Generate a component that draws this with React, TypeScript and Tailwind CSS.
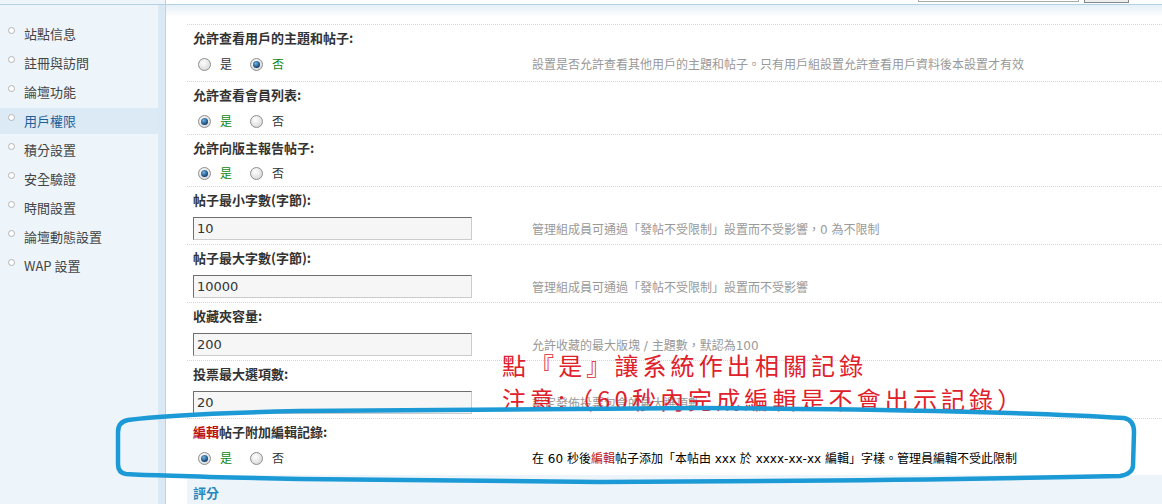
import React from "react";

const menu = [
  "站點信息",
  "註冊與訪問",
  "論壇功能",
  "用戶權限",
  "積分設置",
  "安全驗證",
  "時間設置",
  "論壇動態設置",
  "WAP 設置",
];

const Radio = ({ checked }: { checked?: boolean }) => (
  <span className="relative w-[13px] h-[13px] rounded-full border border-[#8e8e8e] bg-[radial-gradient(circle_at_40%_35%,#ffffff,#cfcfcf)] flex items-center justify-center shrink-0">
    {checked && (
      <span className="w-[7px] h-[7px] rounded-full bg-[radial-gradient(circle_at_40%_35%,#6fb6e8,#123f6e_70%)]" />
    )}
  </span>
);

const YesNo = ({ yes }: { yes: boolean }) => (
  <div className="flex items-center ml-[5px] text-[12px]">
    <Radio checked={yes} />
    <span className={`ml-[9px] ${yes ? "text-[#118811]" : "text-[#333]"}`}>是</span>
    <span className="ml-[18px]">
      <Radio checked={!yes} />
    </span>
    <span className={`ml-[9px] ${!yes ? "text-[#118811]" : "text-[#333]"}`}>否</span>
  </div>
);

type Row = {
  label: React.ReactNode;
  h: string;
  kind: "radio" | "input";
  yes?: boolean;
  value?: string;
  desc?: React.ReactNode;
  dark?: boolean;
};

const rows: Row[] = [
  {
    label: "允許查看用戶的主題和帖子:",
    h: "h-[57px]",
    kind: "radio",
    yes: false,
    desc: "設置是否允許查看其他用戶的主題和帖子。只有用戶組設置允許查看用戶資料後本設置才有效",
  },
  { label: "允許查看會員列表:", h: "h-[53px]", kind: "radio", yes: true },
  { label: "允許向版主報告帖子:", h: "h-[52px]", kind: "radio", yes: true },
  {
    label: "帖子最小字數(字節):",
    h: "h-[58px]",
    kind: "input",
    value: "10",
    desc: "管理組成員可通過「發帖不受限制」設置而不受影響，0 為不限制",
  },
  {
    label: "帖子最大字數(字節):",
    h: "h-[58px]",
    kind: "input",
    value: "10000",
    desc: "管理組成員可通過「發帖不受限制」設置而不受影響",
  },
  {
    label: "收藏夾容量:",
    h: "h-[58px]",
    kind: "input",
    value: "200",
    desc: "允許收藏的最大版塊 / 主題數，默認為100",
  },
  {
    label: "投票最大選項數:",
    h: "h-[58px]",
    kind: "input",
    value: "20",
    desc: "設定發佈投票包含的最大選項數",
  },
  {
    label: (
      <>
        <span className="text-[#bb1111]">編輯</span>帖子附加編輯記錄:
      </>
    ),
    h: "h-[57px]",
    kind: "radio",
    yes: true,
    dark: true,
    desc: (
      <>
        在 60 秒後<span className="text-[#bb1111]">編輯</span>帖子添加「本帖由 xxx 於 xxxx-xx-xx 編輯」字樣。管理員編輯不受此限制
      </>
    ),
  },
];

const descFont = { fontFamily: '"DejaVu Sans", "Noto Sans CJK TC", sans-serif' };

export default function App() {
  return (
    <div
      className="relative w-[1162px] h-[504px] overflow-hidden bg-white flex text-[#333]"
      style={{ fontFamily: '"Noto Sans CJK TC", "Liberation Sans", sans-serif' }}
    >
      {/* sidebar */}
      <div className="w-[166px] h-full flex flex-col border-r border-[#b9d3e3] bg-[#edf4fa]">
        <div className="h-[5px] border-b border-[#b5d0e2] shrink-0" />
        <div className="flex-1 flex">
          <div className="w-[158px] flex flex-col pt-[16px] gap-[3px]">
            {menu.map((m) => (
              <div
                key={m}
                className={`h-[26px] flex items-center pl-[24px] relative text-[13px] ${
                  m === "用戶權限" ? "bg-[#dceaf5] text-[#1f5f99]" : "text-[#444]"
                }`}
              >
                <span className="absolute left-[8px] top-[6px] w-[7px] h-[7px] rounded-full border border-[#b4b4b4] bg-white" />
                {m}
              </div>
            ))}
          </div>
          <div className="flex-1 bg-[#dbe9f4]" />
        </div>
      </div>

      {/* main */}
      <div className="flex-1 h-full flex flex-col">
        <div className="h-[5px] border-b border-[#b5d0e2] shrink-0 flex items-start pl-[752px] gap-[5px]">
          <div className="w-[161px] h-[2px] border-b border-x border-[#aaaaaa] bg-white" />
          <div className="w-[45px] h-[3px] border-b border-x border-[#888] bg-[#eeeeee]" />
        </div>
        <div className="h-[19px] shrink-0 bg-[linear-gradient(#e5f0f8,#ffffff_65%)]" />
        <div className="ml-[21px] flex flex-col">
          {rows.map((r, i) => (
            <div key={i} className={`${r.h} border-t border-dotted border-[#cfd6dc] pl-[6px] flex flex-col`}>
              <div className="h-[26px] flex items-center text-[13px] font-bold text-[#333]">{r.label}</div>
              {r.kind === "radio" ? (
                <div className="h-[26px] flex items-center">
                  <div className="w-[339px]">
                    <YesNo yes={!!r.yes} />
                  </div>
                  {r.desc && (
                    <div
                      className={`text-[12px] mt-[2px] ${r.dark ? "text-black" : "text-[#999]"}`}
                      style={descFont}
                    >
                      {r.desc}
                    </div>
                  )}
                </div>
              ) : (
                <div className="mt-[4px] h-[23px] flex items-center">
                  <div className="w-[339px]">
                    <div
                      className="w-[279px] h-[23px] border border-t-[#6f6f6f] border-l-[#6f6f6f] border-b-[#cccccc] border-r-[#cccccc] bg-[#f6f6f6] flex items-center pl-[3px] text-[13px] text-[#333]"
                      style={{ fontFamily: '"DejaVu Sans", sans-serif' }}
                    >
                      {r.value}
                    </div>
                  </div>
                  <div className="text-[12px] text-[#999] mt-[2px]" style={descFont}>
                    {r.desc}
                  </div>
                </div>
              )}
            </div>
          ))}
          <div className="h-[40px] bg-[#eef5fa] pl-[6px] pt-[5px]">
            <div className="h-[26px] flex items-center text-[13px] font-bold text-[#2a88bd]">評分</div>
          </div>
        </div>
      </div>

      {/* red annotation */}
      <div className="absolute left-[502px] top-[348px] text-[#e0202a] text-[24px] leading-[34px] tracking-[4.1px]">
        <div>點『是』讓系統作出相關記錄</div>
        <div>注意:（60秒內完成編輯是不會出示記錄）</div>
      </div>

      {/* blue outline */}
      <svg className="absolute left-0 top-0 pointer-events-none" width="1162" height="504" viewBox="0 0 1162 504">
        <path
          d="M128,420 Q170,414 300,411 L700,408 Q1000,410 1124,418 Q1134,420 1134,432 L1133,466 Q1132,474 1120,476 Q900,481 600,482 L300,479 Q160,476 126,474 Q118,473 118,464 L118,432 Q118,422 128,420 Z"
          fill="none"
          stroke="#1c9ad6"
          strokeWidth="4.5"
        />
      </svg>
    </div>
  );
}
